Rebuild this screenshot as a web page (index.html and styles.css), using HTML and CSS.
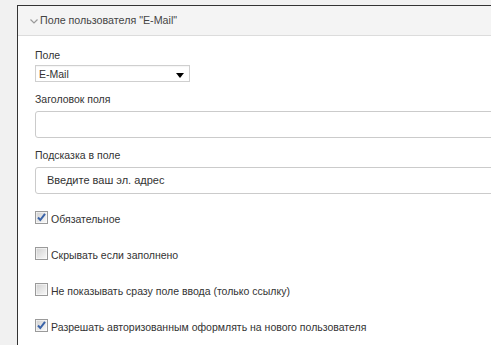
FILE: index.html
```html
<!DOCTYPE html>
<html lang="ru">
<head>
    <meta charset="UTF-8">
    <title>Поле пользователя</title>
    <link rel="stylesheet" href="styles.css">
</head>
<body>
    <div class="panel">
        <div class="panel-head">
            <svg class="chevron" width="8" height="5" viewBox="0 0 8 5"><polyline points="0.5,0.5 4,4 7.5,0.5" fill="none" stroke="#9a9a9a" stroke-width="1.2"/></svg>
            <span>Поле пользователя "E-Mail"</span>
        </div>
        <div class="panel-body">
            <div class="field">
                <label>Поле</label>
                <div class="select">
                    <span>E-Mail</span>
                    <svg width="8" height="5" viewBox="0 0 8 5"><polygon points="0,0 8,0 4,5" fill="#000"/></svg>
                </div>
            </div>

            <div class="field gap">
                <label>Заголовок поля</label>
                <div class="input"></div>
            </div>

            <div class="field gap">
                <label>Подсказка в поле</label>
                <div class="input">Введите ваш эл. адрес</div>
            </div>

            <div class="checks">
                <div class="check">
                    <svg class="box" width="13" height="13" viewBox="0 0 13 13"><use href="#box"/><polyline points="3,6.5 5.3,9 10,2.8" fill="none" stroke="#3a63a8" stroke-width="2"/></svg>
                    <span>Обязательное</span>
                </div>
                <div class="check">
                    <svg class="box" width="13" height="13" viewBox="0 0 13 13"><use href="#box"/></svg>
                    <span>Скрывать если заполнено</span>
                </div>
                <div class="check">
                    <svg class="box" width="13" height="13" viewBox="0 0 13 13"><use href="#box"/></svg>
                    <span>Не показывать сразу поле ввода (только ссылку)</span>
                </div>
                <div class="check">
                    <svg class="box" width="13" height="13" viewBox="0 0 13 13"><use href="#box"/><polyline points="3,6.5 5.3,9 10,2.8" fill="none" stroke="#3a63a8" stroke-width="2"/></svg>
                    <span>Разрешать авторизованным оформлять на нового пользователя</span>
                </div>
            </div>
        </div>
    </div>

    <!-- shared checkbox frame -->
    <svg width="0" height="0" class="defs">
        <defs>
            <linearGradient id="boxfill" x1="0" y1="0" x2="1" y2="1">
                <stop offset="0" stop-color="#d2d2d2"/>
                <stop offset="1" stop-color="#f8f8f8"/>
            </linearGradient>
            <g id="box">
                <rect x="0.5" y="0.5" width="12" height="12" fill="#fff" stroke="#9a9a9a"/>
                <rect x="1.5" y="1.5" width="10" height="10" fill="url(#boxfill)"/>
            </g>
        </defs>
    </svg>
</body>
</html>
```
FILE: styles.css
```css
html, body {
    overflow: hidden;
}

body {
    margin: 0;
    padding: 5px 0 0 17px;
    background-color: #f1f1f1;
    font-family: "Liberation Sans", Arial, sans-serif;
    color: #333;
    height: 340px;
}

.panel {
    width: 474px;
    height: 339px;
    background-color: #fff;
    border-top: 1px solid #333;
    border-left: 1px solid #333;
    overflow: hidden;
}

.panel-head {
    height: 29px;
    line-height: 29px;
    background-color: #f4f4f4;
    border-bottom: 1px solid #dcdcdc;
    font-size: 10.7px;
    color: #444;
    padding-left: 12px;
    display: flex;
    align-items: center;
}

.chevron {
    margin-right: 2px;
    margin-top: 2px;
}

.panel-body {
    padding: 13px 0 0 17px;
}

.field label {
    display: block;
    font-size: 10.5px;
    line-height: 13px;
    margin-bottom: 3px;
}

.gap {
    margin-top: 11px;
}

.gap label {
    margin-bottom: 5px;
}

.select {
    box-sizing: border-box;
    width: 155px;
    height: 17px;
    border: 1px solid #cfcfcf;
    display: flex;
    align-items: center;
    justify-content: space-between;
    padding: 0 5px 0 3px;
    font-size: 10.5px;
    box-shadow: inset 0 1px 1px rgba(0, 0, 0, 0.04);
}

.select svg {
    margin-top: 3px;
}

.input {
    width: 500px;
    height: 25px;
    border: 1px solid #cbcbcb;
    border-radius: 3px;
    line-height: 25px;
    padding-left: 11px;
    font-size: 11px;
    color: #333;
}

.checks {
    margin-top: 17px;
    display: flex;
    flex-direction: column;
    gap: 23px;
}

.check {
    display: flex;
    align-items: center;
    height: 13px;
    font-size: 10.5px;
    color: #333;
}

.check .box {
    margin-right: 3px;
    flex: none;
}

.check span {
    margin-top: 2px;
}

.defs {
    position: absolute;
}
```
